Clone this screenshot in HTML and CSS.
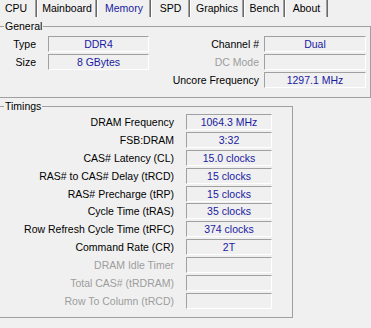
FILE: index.html
```html
<!DOCTYPE html>
<html lang="en">
<head>
    <meta charset="UTF-8">
    <title>CPU-Z Memory</title>
    <link rel="stylesheet" href="styles.css">
</head>
<body>
    <div class="tabs">
        <span class="tab tabCpu">CPU</span>
        <span class="tab tabMainboard">Mainboard</span>
        <span class="tab tabMemory active">Memory</span>
        <span class="tab tabSpd">SPD</span>
        <span class="tab tabGraphics">Graphics</span>
        <span class="tab tabBench">Bench</span>
        <span class="tab tabAbout">About</span>
    </div>

    <fieldset class="group general">
        <legend>General</legend>
        <div class="generalGrid">
            <span class="label">Type</span>
            <span class="field">DDR4</span>
            <span class="label">Channel #</span>
            <span class="field">Dual</span>

            <span class="label">Size</span>
            <span class="field">8 GBytes</span>
            <span class="label disabled">DC Mode</span>
            <span class="field"></span>

            <span class="label"></span>
            <span></span>
            <span class="label">Uncore Frequency</span>
            <span class="field">1297.1 MHz</span>
        </div>
    </fieldset>

    <fieldset class="group timings">
        <legend>Timings</legend>
        <div class="timingGrid">
            <span class="label">DRAM Frequency</span>
            <span class="field">1064.3 MHz</span>
            <span class="label">FSB:DRAM</span>
            <span class="field">3:32</span>
            <span class="label">CAS# Latency (CL)</span>
            <span class="field">15.0 clocks</span>
            <span class="label">RAS# to CAS# Delay (tRCD)</span>
            <span class="field">15 clocks</span>
            <span class="label">RAS# Precharge (tRP)</span>
            <span class="field">15 clocks</span>
            <span class="label">Cycle Time (tRAS)</span>
            <span class="field">35 clocks</span>
            <span class="label">Row Refresh Cycle Time (tRFC)</span>
            <span class="field">374 clocks</span>
            <span class="label">Command Rate (CR)</span>
            <span class="field">2T</span>
            <span class="label disabled">DRAM Idle Timer</span>
            <span class="field"></span>
            <span class="label disabled">Total CAS# (tRDRAM)</span>
            <span class="field"></span>
            <span class="label disabled">Row To Column (tRCD)</span>
            <span class="field"></span>
        </div>
    </fieldset>
</body>
</html>
```

FILE: styles.css
```css
* {
    box-sizing: border-box;
}

body {
    margin: 0;
    background: #f0f0f0;
    font-family: "Liberation Sans", Arial, sans-serif;
    font-size: 10.5px;
    color: #000;
    overflow: hidden;
}

.tabs {
    display: flex;
    height: 17px;
}

.tab {
    height: 17px;
    line-height: 17px;
    border-left: 1px solid #fff;
    border-right: 1px solid #696969;
    box-shadow: inset -1px 0 #a0a0a0;
    text-align: center;
    white-space: nowrap;
}

.tabCpu { width: 42px; margin-left: -5px; }
.tabMainboard { width: 60px; }
.tabMemory { width: 54px; }
.tabSpd { width: 39px; }
.tabGraphics { width: 54px; }
.tabBench { width: 41px; }
.tabAbout { width: 43px; }

.tab.active {
    color: #1a1aa0;
}

.group {
    margin: 0 0 0 -1px;
    border: 1px solid #a0a0a0;
    padding: 0;
    min-width: 0;
}

.group legend {
    margin-left: 4px;
    padding: 0 1px;
    line-height: 12px;
    height: 12px;
}

.general {
    width: 372px;
    margin-top: 3px;
    padding: 4px 4px 9px 0;
}

.generalGrid {
    display: grid;
    grid-template-columns: 48px 101px 115px 102px;
    grid-template-rows: repeat(3, 16px);
    row-gap: 2px;
}

.generalGrid .label:nth-child(2n+1) {
    padding-right: 12px;
}

.generalGrid .label:nth-child(4n+3) {
    padding-right: 5px;
}

.timings {
    width: 294px;
    margin-top: 2px;
    padding: 2px 20px 8px 0;
}

.timingGrid {
    display: grid;
    grid-template-columns: 174px 86px;
    grid-auto-rows: 16px;
    column-gap: 12px;
    row-gap: 1.9px;
}

.label {
    text-align: right;
    line-height: 16px;
    white-space: nowrap;
}

.disabled {
    color: #9d9d9d;
}

.field {
    border-top: 1px solid #a0a0a0;
    border-left: 1px solid #a0a0a0;
    border-right: 1px solid #fff;
    border-bottom: 1px solid #fff;
    color: #1a1aa0;
    text-align: center;
    line-height: 14px;
    white-space: nowrap;
}
```
